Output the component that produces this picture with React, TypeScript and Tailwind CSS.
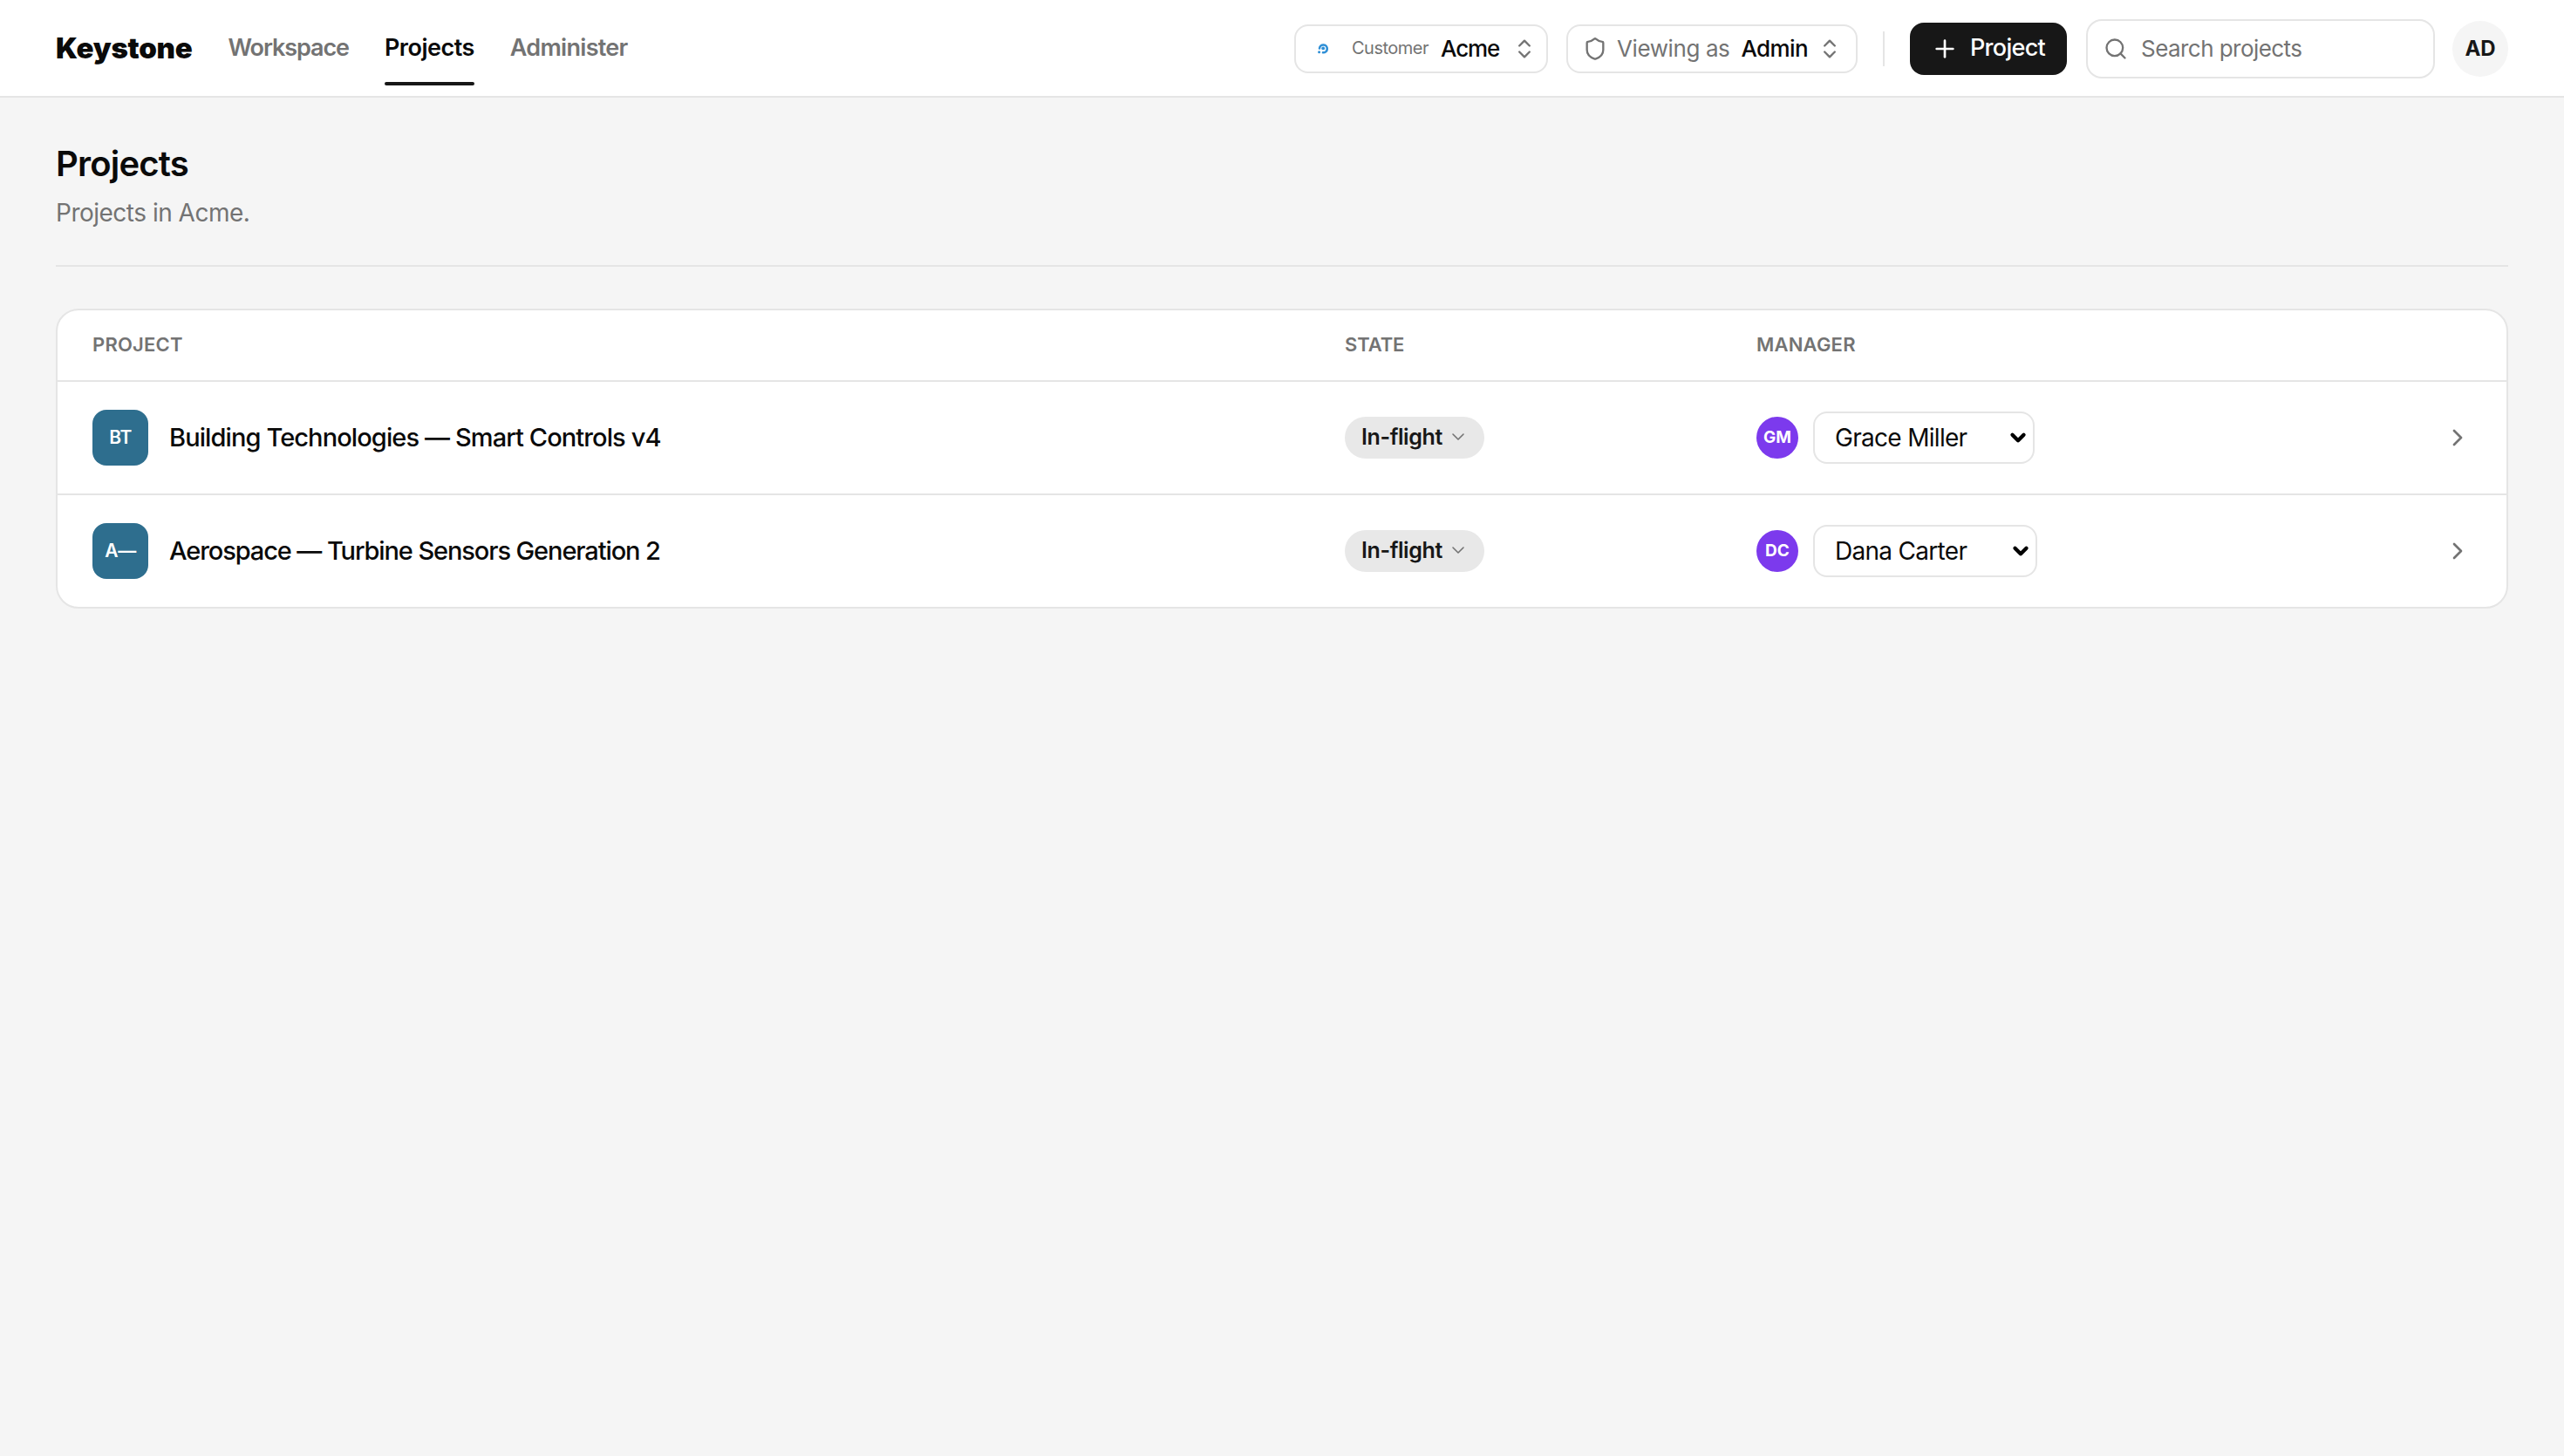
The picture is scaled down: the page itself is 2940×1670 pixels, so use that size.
import { ChevronDown, ChevronRight, ChevronsUpDown, Plus, Search, Shield } from "lucide-react";

const rows = [
  { code: "BT", title: "Building Technologies — Smart Controls v4", titleClass: "tracking-[-0.9px]", initials: "GM", manager: "Grace Miller", selectWidth: "w-[254px]" },
  { code: "A—", title: "Aerospace — Turbine Sensors Generation 2", titleClass: "tracking-[-1.1px]", initials: "DC", manager: "Dana Carter", selectWidth: "w-[257px]" },
];

function NavItem({ label, className }: { label: string; className: string }) {
  const active = label === "Projects";
  return (
    <a className="flex flex-col pt-[38px]">
      <span className={`text-[27px] leading-[34px] font-semibold ${className}`}>{label}</span>
      <span className={active ? "mt-[22px] h-[4px] rounded-full bg-[#171717]" : "mt-[22px] h-[4px]"} />
    </a>
  );
}

function Header() {
  return (
    <header className="flex h-[112px] items-center justify-between border-b-2 border-[#e5e5e5] bg-white px-[64px]">
      <div className="flex h-full items-start gap-[41px]">
        <div className="mt-[35px] text-[33px] leading-[40px] font-black tracking-[-0.25px] text-[#0a0a0a]">Keystone</div>
        <nav className="flex gap-[41px]">
          <NavItem label="Workspace" className="tracking-[-1.1px] text-[#737373]" />
          <NavItem label="Projects" className="tracking-[-0.5px] text-[#0a0a0a]" />
          <NavItem label="Administer" className="tracking-[-0.7px] text-[#737373]" />
        </nav>
      </div>
      <div className="flex items-center whitespace-nowrap pt-[2px]">
        <button className="flex h-[56px] w-[291px] items-center rounded-[16px] border-2 border-[#e5e5e5] bg-white pl-[23px]">
          <svg width="16" height="16" viewBox="0 0 16 16" fill="none" className="shrink-0">
            <path d="M4 7.5a4.4 4.4 0 1 1 4 4.8" stroke="#2f8fd6" strokeWidth="2.6" strokeLinecap="round" />
            <circle cx="8.2" cy="7.4" r="1.9" fill="#2f8fd6" />
            <circle cx="3.6" cy="11.8" r="1.5" fill="#2f8fd6" />
          </svg>
          <span className="ml-[25px] pb-[2px] text-[20px] tracking-[-0.5px] text-[#737373]">Customer</span>
          <span className="ml-[14px] pb-[2px] text-[26px] font-medium tracking-[-1.1px] text-[#0a0a0a]">Acme</span>
          <ChevronsUpDown size={28} strokeWidth={2} className="ml-[15px] shrink-0 text-[#737373]" />
        </button>
        <button className="ml-[21px] flex h-[56px] w-[334px] items-center rounded-[16px] border-2 border-[#e5e5e5] bg-white pl-[17px]">
          <Shield size={28} strokeWidth={2} className="shrink-0 text-[#737373]" />
          <span className="ml-[11px] pb-[2px] text-[26px] tracking-[-0.4px] text-[#737373]">Viewing as</span>
          <span className="ml-[13px] pb-[2px] text-[26px] font-medium tracking-[-0.6px] text-[#0a0a0a]">Admin</span>
          <ChevronsUpDown size={28} strokeWidth={2} className="ml-[11px] shrink-0 text-[#737373]" />
        </button>
        <div className="mx-[29px] h-[40px] w-[2px] bg-[#e5e5e5]" />
        <button className="flex h-[60px] w-[180px] items-center rounded-[16px] bg-[#171717] pl-[24px] text-white">
          <Plus size={32} strokeWidth={2} className="shrink-0" />
          <span className="ml-[13px] pb-[2px] text-[27px] font-medium tracking-[-0.7px]">Project</span>
        </button>
        <label className="ml-[22px] flex h-[68px] w-[400px] items-center rounded-[18px] border-2 border-[#e5e5e5] bg-white pl-[18px]">
          <Search size={28} strokeWidth={2} className="shrink-0 text-[#737373]" />
          <input placeholder="Search projects" className="ml-[15px] mb-[2px] w-full bg-transparent text-[26px] tracking-[-0.55px] outline-none placeholder:text-[#737373]" />
        </label>
        <div className="ml-[20px] flex h-[64px] w-[64px] items-center justify-center rounded-full bg-[#f5f5f5] text-[24px] font-bold text-[#171717]">AD</div>
      </div>
    </header>
  );
}

function ProjectRow({ row }: { row: (typeof rows)[number] }) {
  return (
    <div className="grid h-[130px] grid-cols-[1436px_472px_1fr] items-center border-t-2 border-[#e5e5e5] px-[40px]">
      <div className="flex items-center gap-[24px]">
        <div className="flex h-[64px] w-[64px] items-center justify-center rounded-[16px] bg-[#2e6e8e] text-[21px] font-semibold tracking-[-0.5px] text-white">{row.code}</div>
        <div className={`text-[29px] font-medium text-[#0a0a0a] ${row.titleClass}`}>{row.title}</div>
      </div>
      <div>
        <button className="flex h-[48px] w-[160px] items-center rounded-full bg-[#e8e8e8] pl-[19px]">
          <span className="text-[25px] font-semibold tracking-[-0.4px] text-[#171717]">In-flight</span>
          <ChevronDown size={24} strokeWidth={1.6} className="ml-[6px] mb-[3px] shrink-0 text-[#737373]" />
        </button>
      </div>
      <div className="flex items-center justify-between">
        <div className="flex items-center gap-[17px]">
          <div className="flex h-[48px] w-[48px] items-center justify-center rounded-full bg-[#7c3aed] text-[19px] font-bold text-white">{row.initials}</div>
          <div className={`relative ${row.selectWidth}`}>
            <select className="h-[60px] w-full appearance-none rounded-[16px] border-2 border-[#e5e5e5] bg-white pl-[23px] text-[28px] tracking-[-0.7px] text-[#0a0a0a] outline-none">
              <option>{row.manager}</option>
            </select>
            <ChevronDown size={26} strokeWidth={4} className="pointer-events-none absolute right-[6px] top-[17px] text-black" />
          </div>
        </div>
        <ChevronRight size={32} strokeWidth={2} className="text-[#737373]" />
      </div>
    </div>
  );
}

export default function App() {
  return (
    <div className="min-h-screen bg-[#f5f5f5] font-['Inter',sans-serif]">
      <Header />
      <main className="px-[64px] pt-[51px]">
        <div className="border-b-2 border-[#e5e5e5] pb-[40px]">
          <h1 className="text-[40px] leading-[50px] font-semibold tracking-[-0.8px] text-[#0a0a0a]">Projects</h1>
          <p className="mt-[11px] text-[28px] leading-[40px] tracking-[-0.5px] text-[#737373]">Projects in Acme.</p>
        </div>
        <section className="mt-[48px] overflow-hidden rounded-[26px] border-2 border-[#e5e5e5] bg-white">
          <div className="grid h-[80px] grid-cols-[1436px_472px_1fr] items-center px-[40px] pb-[2px] text-[22px] font-semibold tracking-[0.2px] text-[#737373]">
            <div>PROJECT</div>
            <div className="tracking-[-0.1px]">STATE</div>
            <div>MANAGER</div>
          </div>
          {rows.map((row) => (
            <ProjectRow key={row.code} row={row} />
          ))}
        </section>
      </main>
    </div>
  );
}
